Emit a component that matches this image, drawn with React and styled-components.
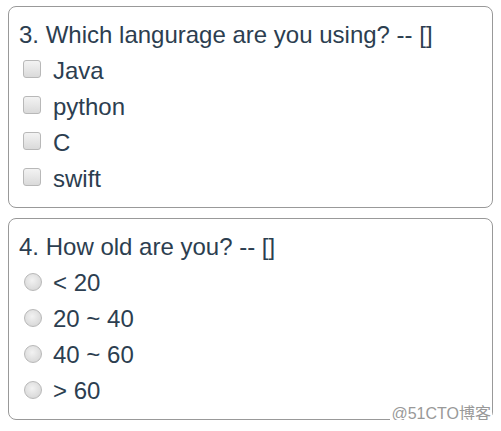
import React from "react";
import styled, { createGlobalStyle } from "styled-components";

const questions = [
  {
    id: 3,
    title: "Which langurage are you using?",
    type: "checkbox",
    options: ["Java", "python", "C", "swift"],
  },
  {
    id: 4,
    title: "How old are you?",
    type: "radio",
    options: ["< 20", "20 ~ 40", "40 ~ 60", "> 60"],
  },
];

const App = () => {
  return (
    <>
      <GlobalStyle />
      <Page>
        {questions.map((q) => (
          <Card key={q.id}>
            <Title>
              {q.id}. {q.title} -- []
            </Title>
            {q.options.map((opt) => (
              <Option key={opt}>
                {q.type === "checkbox" ? (
                  <CheckBox type="checkbox" name={`q${q.id}`} value={opt} />
                ) : (
                  <Radio type="radio" name={`q${q.id}`} value={opt} />
                )}
                <Label>{opt}</Label>
              </Option>
            ))}
          </Card>
        ))}
        <Watermark>@51CTO博客</Watermark>
      </Page>
    </>
  );
};

const GlobalStyle = createGlobalStyle`
  body {
    margin: 6px 8px;
    background: #fff;
    font-family: "Liberation Sans", Arial, sans-serif;
    color: #2c3e50;
  }
`;

const Page = styled.div`
  position: relative;
  display: flex;
  flex-direction: column;
  gap: 10px;
`;

const Card = styled.div`
  border: 1px solid #999;
  border-radius: 8px;
  padding: 10px;
`;

const Title = styled.div`
  font-size: 24px;
  line-height: 36px;
  height: 36px;
  white-space: nowrap;
`;

const Option = styled.label`
  display: flex;
  align-items: flex-start;
  height: 36px;
  font-size: 24px;
  line-height: 36px;
`;

const BaseInput = styled.input`
  appearance: none;
  -webkit-appearance: none;
  flex: none;
  width: 18px;
  height: 18px;
  margin: 0;
  border: 1px solid #b8b8b8;
  box-sizing: border-box;
`;

const CheckBox = styled(BaseInput)`
  margin: 7px 12px 0 4px;
  border-radius: 3px;
  background: linear-gradient(#f3f3f3, #dadada);
`;

const Radio = styled(BaseInput)`
  margin: 8px 11px 0 5px;
  border-radius: 50%;
  background: radial-gradient(circle at 45% 40%, #f2f2f2 0%, #dedede 60%, #cfcfcf 100%);
`;

const Label = styled.span`
  white-space: nowrap;
`;

const Watermark = styled.div`
  position: absolute;
  right: 1px;
  bottom: -2px;
  padding: 0 1px;
  background: #fff;
  color: #999;
  font-family: "Liberation Sans", "Noto Sans CJK SC", sans-serif;
  font-size: 16px;
  line-height: 16px;
`;

export default App;
